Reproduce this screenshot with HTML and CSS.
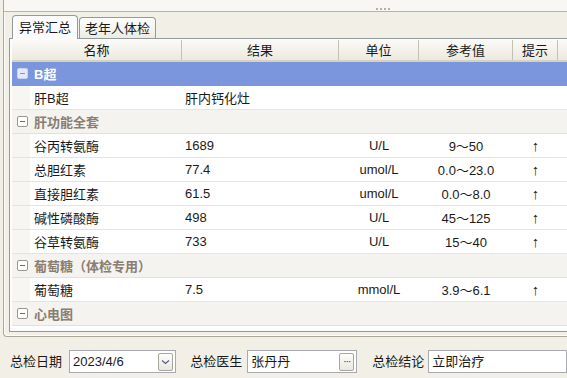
FILE: index.html
```html
<!DOCTYPE html>
<html lang="zh-CN">
  <head>
    <meta charset="utf-8">
    <title>体检结果</title>
    <link rel="stylesheet" href="styles.css">
  </head>
  <body>
    <div class="frame">
      <div class="top"><span class="grip"><i></i><i></i><i></i><i></i></span></div>
      <div class="tabs">
        <span class="tab active">异常汇总</span>
        <span class="tab">老年人体检</span>
      </div>
      <div class="panel">
        <div class="grid">
          <div class="row head">
            <span class="c-name">名称</span>
            <span class="c-res">结果</span>
            <span class="c-unit">单位</span>
            <span class="c-ref">参考值</span>
            <span class="c-tip">提示</span>
            <span class="c-more"></span>
          </div>
          <div class="row group selected"><span class="box"></span>B超</div>
          <div class="row item">
            <span class="c-name">肝B超</span><span class="c-res">肝内钙化灶</span>
            <span class="c-unit"></span><span class="c-ref"></span><span class="c-tip"></span>
          </div>
          <div class="row group"><span class="box"></span>肝功能全套</div>
          <div class="row item">
            <span class="c-name">谷丙转氨酶</span><span class="c-res">1689</span>
            <span class="c-unit">U/L</span><span class="c-ref">9～50</span><span class="c-tip">↑</span>
          </div>
          <div class="row item">
            <span class="c-name">总胆红素</span><span class="c-res">77.4</span>
            <span class="c-unit">umol/L</span><span class="c-ref">0.0～23.0</span><span class="c-tip">↑</span>
          </div>
          <div class="row item">
            <span class="c-name">直接胆红素</span><span class="c-res">61.5</span>
            <span class="c-unit">umol/L</span><span class="c-ref">0.0～8.0</span><span class="c-tip">↑</span>
          </div>
          <div class="row item">
            <span class="c-name">碱性磷酸酶</span><span class="c-res">498</span>
            <span class="c-unit">U/L</span><span class="c-ref">45～125</span><span class="c-tip">↑</span>
          </div>
          <div class="row item">
            <span class="c-name">谷草转氨酶</span><span class="c-res">733</span>
            <span class="c-unit">U/L</span><span class="c-ref">15～40</span><span class="c-tip">↑</span>
          </div>
          <div class="row group"><span class="box"></span>葡萄糖（体检专用）</div>
          <div class="row item">
            <span class="c-name">葡萄糖</span><span class="c-res">7.5</span>
            <span class="c-unit">mmol/L</span><span class="c-ref">3.9～6.1</span><span class="c-tip">↑</span>
          </div>
          <div class="row group"><span class="box"></span>心电图</div>
        </div>
      </div>
    </div>
    <div class="footer">
      <label>总检日期</label>
      <span class="field date">2023/4/6<span class="btn drop"><svg width="9" height="6" viewBox="0 0 9 6"><path d="M1 1.5 L4.5 4.5 L8 1.5" fill="none" stroke="#4d6185" stroke-width="1.2"/></svg></span></span>
      <label>总检医生</label>
      <span class="field doctor">张丹丹<span class="btn dots">···</span></span>
      <label>总检结论</label>
      <span class="field result">立即治疗</span>
    </div>
  </body>
</html>
```

FILE: styles.css
```css
body {
  margin: 0;
  width: 567px;
  height: 378px;
  overflow: hidden;
  background: #f1efe6;
  font-family: "Liberation Sans", "Noto Sans CJK SC", sans-serif;
  font-size: 13px;
  color: #1a1a1a;
}

.frame {
  margin-left: 3px;
  height: 336px;
  border-left: 1px solid #aca899;
  border-bottom: 1px solid #aca899;
  border-bottom-left-radius: 4px;
  box-shadow: inset 1px -1px 0 #fdfcf8;
}

.top {
  height: 11px;
  background: #f8f7f3;
  border-bottom: 1px solid #b8b4a6;
  display: flex;
  align-items: flex-end;
  padding-left: 372px;
}

.grip {
  display: flex;
  gap: 2px;
  margin-bottom: 1px;
}

.grip i {
  width: 2px;
  height: 2px;
  background: #b5b1a2;
}

.tabs {
  display: flex;
  align-items: flex-end;
  height: 23px;
  margin-top: 3px;
  padding-left: 8px;
  position: relative;
  z-index: 1;
}

.tab {
  height: 20px;
  line-height: 21px;
  padding: 0 5px;
  border: 1px solid #919b9c;
  border-bottom: none;
  border-radius: 4px 4px 0 0;
  background: linear-gradient(#fefefd, #ecebe5);
}

.tab.active {
  height: 23px;
  line-height: 24px;
  padding: 0 6px;
  margin-right: 1px;
  margin-bottom: -1px;
  background: #fcfcfe;
}

.panel {
  margin-left: 5px;
  height: 291px;
  border: 1px solid #919b9c;
  border-right: none;
  background: #fcfcfe;
  padding: 1px 0 0 2px;
}

.grid {
  height: 288px;
  overflow: hidden;
  background: #fff;
}

.row {
  display: flex;
  height: 23px;
  border-bottom: 1px solid #e6e4dd;
  align-items: center;
  white-space: nowrap;
}

.row > span {
  flex: none;
}

.c-name { width: 148px; padding-left: 22px; }
.c-res { width: 154px; padding-left: 3px; }
.c-unit { width: 80px; text-align: center; }
.c-ref { width: 94px; text-align: center; }
.c-tip {
  width: 45px;
  text-align: center;
  font-family: "Liberation Sans", sans-serif;
  font-size: 15px;
}
.c-more { width: 40px; }

.head {
  height: 20px;
  border-bottom: 2px solid #d6d2c2;
  background: linear-gradient(#fbfaf7, #ece9df);
}

.head > span {
  height: 20px;
  line-height: 21px;
  text-align: center;
  border-right: 1px solid #c5c1b2;
  box-sizing: border-box;
  padding: 0;
  font-family: "Liberation Sans", "Noto Sans CJK SC", sans-serif;
  font-size: 13px;
}

.head .c-name { width: 170px; }
.head .c-res { width: 157px; }
.head .c-tip { width: 45px; }

.item {
  background: linear-gradient(90deg, #f7f6f2 18px, #fff 18px);
}

.group {
  background: #f4f3ef;
  color: #8a7d71;
  font-weight: bold;
  padding-left: 5px;
  border-bottom-color: #e3e1da;
}

.group.selected {
  background: #7b96dc;
  color: #fff;
  border-bottom-color: #7b96dc;
}

.box {
  width: 9px;
  height: 9px;
  border: 1px solid #9a958c;
  border-radius: 2px;
  background: #fff;
  margin-right: 6px;
  position: relative;
}

.box::after {
  content: "";
  position: absolute;
  left: 2px;
  top: 4px;
  width: 5px;
  height: 1px;
  background: #6d6a64;
}

.selected .box {
  border-color: #c9d3ee;
  background: #e4e9f7;
}

.selected .box::after {
  background: #8c96b0;
}

.footer {
  display: flex;
  align-items: flex-end;
  height: 36px;
  padding: 0 0 4px 10px;
  white-space: nowrap;
}

.footer label {
  line-height: 23px;
}

.field {
  height: 21px;
  line-height: 21px;
  border: 1px solid #a7abb0;
  background: #fff;
  padding-left: 3px;
  display: flex;
  align-items: center;
}

.date {
  width: 107px;
  margin: 0 14px 0 7px;
}

.doctor {
  width: 110px;
  margin: 0 15px 0 5px;
}

.result {
  width: 140px;
  margin-left: 4px;
}

.btn {
  margin-left: auto;
  margin-right: 2px;
  width: 13px;
  height: 16px;
  border: 1px solid #a9a79d;
  border-radius: 2px;
  background: linear-gradient(#fdfdfb, #e9e7df);
  display: flex;
  align-items: center;
  justify-content: center;
}

.dots {
  font-size: 10px;
  line-height: 16px;
  color: #333;
  letter-spacing: -1px;
}
```
